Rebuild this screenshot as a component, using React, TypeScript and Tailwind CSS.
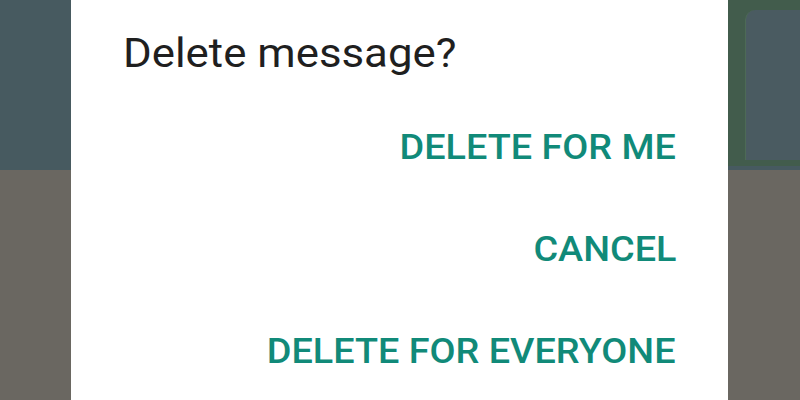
import React from "react";

const actions = ["DELETE FOR ME", "CANCEL", "DELETE FOR EVERYONE"];

export default function App() {
  return (
    <div className="relative w-[800px] h-[400px] overflow-hidden font-['Roboto',sans-serif]">
      {/* dimmed chat behind the dialog */}
      <div className="flex flex-col h-full">
        <div className="h-[170px] bg-[#475a60] flex justify-end">
          <div className="w-[72px] h-[166px] bg-[#425c4c] flex justify-end pt-[10px]">
            <div className="w-[55px] h-[150px] bg-[#4a5b61] rounded-tl-[10px] border-l border-[#4d6a56]" />
          </div>
        </div>
        <div className="flex-1 bg-[#6a6761]" />
      </div>

      {/* dialog */}
      <div className="absolute top-0 bottom-0 left-[71px] w-[657px] bg-white flex flex-col items-start">
        <h2 className="mt-[34px] ml-[52px] text-[40px] leading-[40px] text-[#1f1f1f] font-normal scale-x-[1.095] origin-left">
          Delete message?
        </h2>
        <div className="self-stretch flex flex-col items-end pr-[52px] mt-[56px] gap-[67px]">
          {actions.map((a) => (
            <button
              key={a}
              className="text-[35px] leading-[35px] font-medium text-[#118a79] scale-x-[1.08] origin-right"
            >
              {a}
            </button>
          ))}
        </div>
      </div>
    </div>
  );
}
